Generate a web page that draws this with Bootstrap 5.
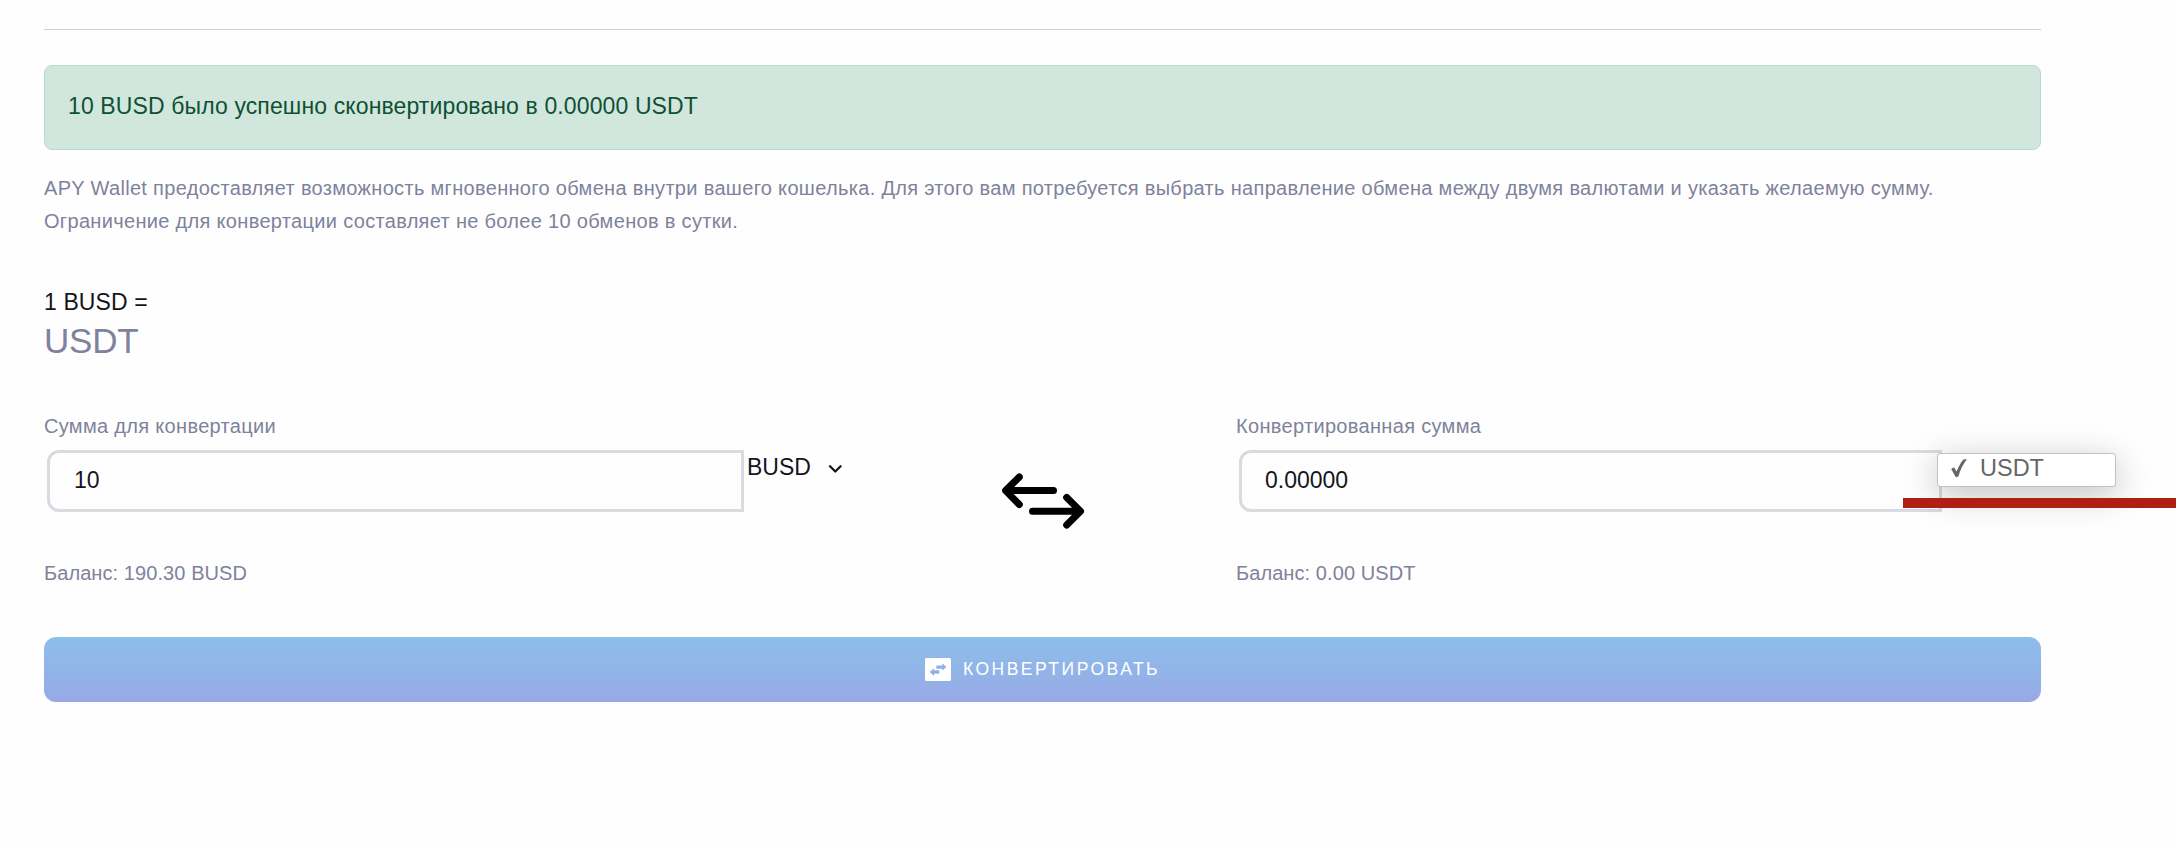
<!DOCTYPE html>
<html lang="ru">
<head>
<meta charset="utf-8">
<meta name="viewport" content="width=device-width, initial-scale=1">
<title>APY Wallet</title>
<link rel="stylesheet" href="https://cdn.jsdelivr.net/npm/bootstrap@5.3.0/dist/css/bootstrap.min.css">
<style>
body { font-family: "Liberation Sans", Arial, sans-serif; font-size: 20px; line-height: 33px; color: #7e829c; background: #fefefe; overflow: hidden; }
.converter { padding: 29px 135px 0 44px; }
.rule { border-top: 1px solid #cdd0d0; opacity: 1; margin: 0 0 35px; }
.notice { height: 85px; padding: 0 23px 2px; border-radius: 8px; font-size: 23px; color: #0f5132; background: #d1e7dd; border-color: #badbcc; margin-bottom: 22px; letter-spacing: .12px; }
.intro { margin-bottom: 47px; letter-spacing: .318px; }
.ink { color: #14151c; }
.rate-from { font-size: 23px; line-height: 34px; margin-bottom: 1px; letter-spacing: .1px; }
.rate-to { font-size: 35px; line-height: 42px; margin-bottom: 49px; letter-spacing: -.2px; }
.side { width: 804px; }
.side-to { width: 805px; }
.side-label { line-height: 30px; margin-bottom: 9px; letter-spacing: .32px; }
.amount { height: 62px; flex: none; border: 3px solid #dadae1; border-radius: 12px 0 0 12px; padding: 0 24px 2px; font-size: 23px; color: #14151c; background: #fefefe; margin-left: 3px; }
.amount-from { width: 697px; }
.amount-to { width: 703px; margin-left: 3px; padding-left: 23px; }
.currency { font-size: 23px; line-height: 34px; padding-left: 3px; gap: 17px; }
.balance { line-height: 30px; margin: 46px 0 49px; letter-spacing: .08px; }
.swap { padding: 62px 0 0 1px; }
.picker { display: block; left: 701px; top: 3px; width: 179px; min-width: 0; height: 34px; padding: 1px 0 0 13px; border: 1px solid #c2c2c2; border-radius: 3px; box-shadow: 0 8px 34px rgba(0,0,0,.25); color: #666; font-size: 23.5px; line-height: 27px; z-index: 1; }
.choice { gap: 13px; }
.underline-mark { left: 667px; top: 48px; width: 273px; height: 10px; background: #b01e14; z-index: 2; }
.convert { height: 65px; border: 0; border-radius: 12px; background: linear-gradient(#8bc3ea 0, #8ebce8 8%, #91b4e8 50%, #98aae6 96%, #a0a1e4 100%); color: #fff; font-size: 17.5px; letter-spacing: 2.5px; gap: 12px; }
</style>
</head>
<body>
<main class="converter text-nowrap">
  <hr class="rule">
  <div class="alert notice d-flex align-items-center" role="alert">10 BUSD было успешно сконвертировано в 0.00000 USDT</div>
  <p class="intro">APY Wallet предоставляет возможность мгновенного обмена внутри вашего кошелька. Для этого вам потребуется выбрать направление обмена между двумя валютами и указать желаемую сумму.<br>Ограничение для конвертации составляет не более 10 обменов в сутки.</p>
  <div class="rate-from ink">1 BUSD =</div>
  <div class="rate-to">USDT</div>
  <div class="d-flex justify-content-between">
    <section class="side">
      <div class="side-label">Сумма для конвертации</div>
      <div class="d-flex">
        <input class="form-control amount amount-from" value="10" aria-label="Сумма">
        <div class="currency ink d-flex align-self-start align-items-center"><span>BUSD</span>
          <svg width="15" height="11" viewBox="0 0 15 11" fill="none" stroke="#14151c" stroke-width="2.3" stroke-linecap="round" stroke-linejoin="round"><path d="M2 4.300 7.300 9.500 12.600 4.300"/></svg>
        </div>
      </div>
      <div class="balance">Баланс: 190.30 BUSD</div>
    </section>
    <div class="swap">
      <svg width="84" height="56" viewBox="1001 473 84 56" fill="none" stroke="#000" stroke-width="7" stroke-linecap="round" stroke-linejoin="round"><path d="M1053.500 490.500H1006M1019.300 477 1005.600 490.600 1019.300 504.500M1032.500 511.200H1080M1066.700 497.500 1080.500 511.200 1066.700 525"/></svg>
    </div>
    <section class="side-to">
      <div class="side-label">Конвертированная сумма</div>
      <div class="d-flex position-relative">
        <input class="form-control amount amount-to" value="0.00000" aria-label="Конвертированная сумма">
        <div class="dropdown-menu picker">
          <div class="choice d-flex align-items-center"><svg width="16" height="19" viewBox="0 0 16 19" fill="#666"><path d="M.2 10 3 8.300l2.600 4.300C8 7 10.300 2.500 12.300.8 13.500.3 14.600.2 15.800.4 12 5 9.200 11 7.400 17.500L4.800 18.300Z"/></svg><span>USDT</span></div>
        </div>
        <div class="underline-mark position-absolute"></div>
      </div>
      <div class="balance">Баланс: 0.00 USDT</div>
    </section>
  </div>
  <button class="btn convert w-100 d-flex align-items-center justify-content-center" type="button">
    <svg width="26" height="23" viewBox="0 0 26 23"><rect width="26" height="23" rx="1.500" fill="#fff"/><path fill="#8fb1e8" d="M11.300 7.400H17.300V5.200L21.300 9.100 17.300 12.800V10.700H11.300ZM14.300 12.300H9V10.200L4.700 14.100 9 18.100V15.700H14.300Z"/></svg>
    <span>КОНВЕРТИРОВАТЬ</span>
  </button>
</main>
<script src="https://cdn.jsdelivr.net/npm/bootstrap@5.3.0/dist/js/bootstrap.bundle.min.js"></script>
</body>
</html>
